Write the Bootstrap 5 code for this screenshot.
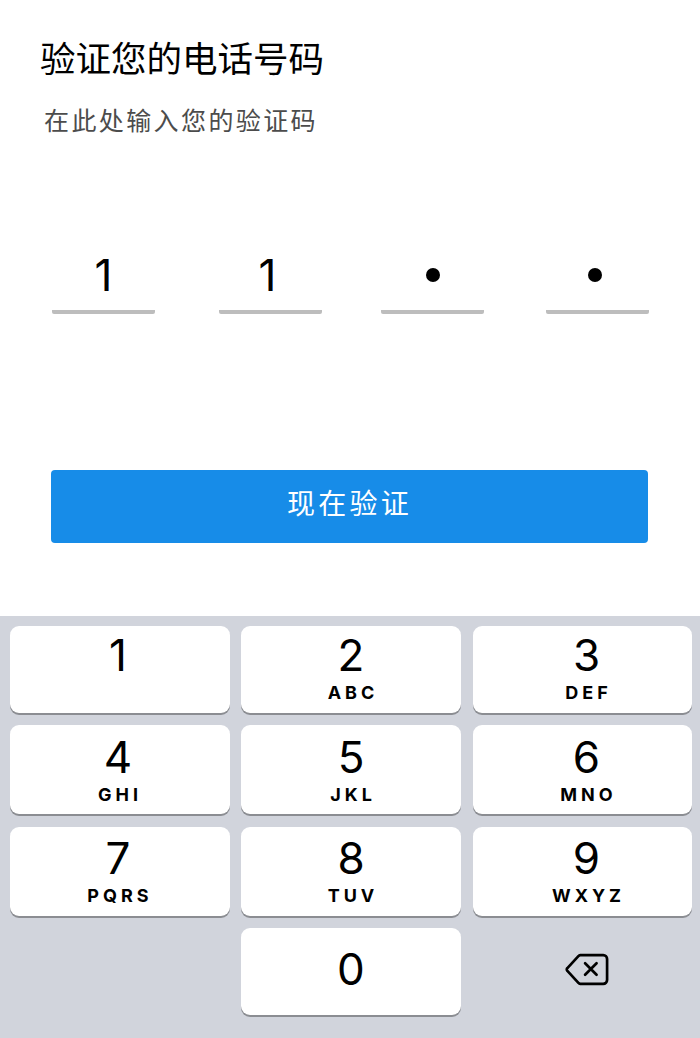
<!DOCTYPE html>
<html lang="zh">
<head>
<meta charset="utf-8">
<title>验证您的电话号码</title>
<link href="https://cdn.jsdelivr.net/npm/bootstrap@5.3.0/dist/css/bootstrap.min.css" rel="stylesheet">
<style>
html,body{height:1038px;overflow:hidden;background:#fff;}
body{font-family:"Inter","Liberation Sans","Noto Sans CJK SC",sans-serif;color:#000;}
.screen{height:1038px;}
.upper{height:616px;flex:none;}
.head-title{font-family:"Noto Sans CJK SC",sans-serif;font-size:35.5px;font-weight:400;line-height:44px;margin:0;padding:35px 0 0 40px;}
.head-sub{font-family:"Noto Sans CJK SC",sans-serif;font-size:25px;line-height:36px;margin:0;padding:22px 0 0 44px;letter-spacing:2.4px;color:#4c4c4c;}
.code-row{padding-left:52px;margin-top:120px;height:93px;}
.code-cell{width:103px;height:57px;border-bottom:4px solid #bdbdbd;border-radius:0 0 2px 2px;font-size:44px;font-weight:400;line-height:36px;text-align:center;flex:none;}
.code-cell:nth-child(2){margin-left:64px;padding-right:6px;}
.code-cell:nth-child(3){margin-left:59px;}
.code-cell:nth-child(4){margin-left:62px;padding-right:5px;}
.code-dot{display:block;width:14px;height:14px;border-radius:50%;background:#000;margin:11px auto 0;}
.verify-btn{display:block;margin:120px 52px 0 51px;width:597px;height:73px;background:#178ce8;border:0;border-radius:4px;color:#fff;font-family:"Noto Sans CJK SC",sans-serif;font-size:28px;letter-spacing:3.3px;line-height:64px;padding:0 0 15px;}
.verify-btn:hover,.verify-btn:active{background:#178ce8!important;color:#fff!important;}
.pad{flex:1;background:#d1d4dc;padding:10px 8px 0 10px;display:grid;grid-template-columns:220px 220px 220px;grid-template-rows:87px 89px 89px 87px;column-gap:11px;row-gap:12.4px;}
.pad-key{background:#fff;border-radius:9px;box-shadow:0 2px 0 #8b8d92;display:flex;flex-direction:column;align-items:center;color:#000;}
.pad-key:nth-child(3n+1){padding-right:4px;}
.pad-key:nth-child(3n){margin-left:1px;padding-left:8px;}
.pad-num{font-size:44px;line-height:52px;font-weight:400;margin-top:3px;}
.pad-let{font-size:18px;line-height:20px;font-weight:700;letter-spacing:4px;margin-top:2px;padding-left:4px;}
.pad-key:nth-child(n+4) .pad-num{margin-top:6px;}
.pad-key:nth-child(n+7) .pad-num{margin-top:5px;}
.pad-key:nth-child(n+4) .pad-let{margin-top:2px;}
.pad-blank{background:transparent;}
.pad-back{display:flex;align-items:center;justify-content:center;padding-left:10px;padding-bottom:5px;}
.pad-key:nth-child(11) .zero-num{margin-top:15px;}
</style>
</head>
<body>
<div class="screen d-flex flex-column">
  <div class="upper">
    <h1 class="head-title">验证您的电话号码</h1>
    <p class="head-sub">在此处输入您的验证码</p>
    <div class="code-row d-flex">
      <div class="code-cell">1</div>
      <div class="code-cell">1</div>
      <div class="code-cell"><span class="code-dot"></span></div>
      <div class="code-cell"><span class="code-dot"></span></div>
    </div>
    <button type="button" class="btn verify-btn">现在验证</button>
  </div>
  <div class="pad">
    <div class="pad-key"><span class="pad-num">1</span></div>
    <div class="pad-key"><span class="pad-num">2</span><span class="pad-let">ABC</span></div>
    <div class="pad-key"><span class="pad-num">3</span><span class="pad-let">DEF</span></div>
    <div class="pad-key"><span class="pad-num">4</span><span class="pad-let">GHI</span></div>
    <div class="pad-key"><span class="pad-num">5</span><span class="pad-let">JKL</span></div>
    <div class="pad-key"><span class="pad-num">6</span><span class="pad-let">MNO</span></div>
    <div class="pad-key"><span class="pad-num">7</span><span class="pad-let">PQRS</span></div>
    <div class="pad-key"><span class="pad-num">8</span><span class="pad-let">TUV</span></div>
    <div class="pad-key"><span class="pad-num">9</span><span class="pad-let">WXYZ</span></div>
    <div class="pad-blank"></div>
    <div class="pad-key"><span class="pad-num zero-num">0</span></div>
    <div class="pad-back">
      <svg width="44" height="33" viewBox="0 0 46 34" fill="none" stroke="#000" stroke-width="2.8" stroke-linejoin="round" stroke-linecap="round"><path d="M16 2H40a4 4 0 0 1 4 4V28a4 4 0 0 1-4 4H16a3 3 0 0 1-2-1L2.500 18.500a2 2 0 0 1 0-3L14 3a3 3 0 0 1 2-1Z"/><path d="M21 10.500 33 22.500M33 10.500 21 22.500"/></svg>
    </div>
  </div>
</div>
<script src="https://cdn.jsdelivr.net/npm/bootstrap@5.3.0/dist/js/bootstrap.bundle.min.js"></script>
</body>
</html>
